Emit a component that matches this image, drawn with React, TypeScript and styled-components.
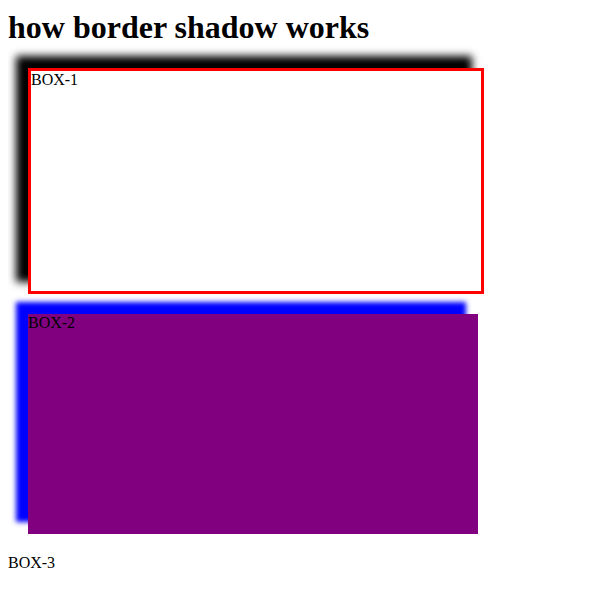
import React from "react";
import styled, { createGlobalStyle } from "styled-components";

const GlobalStyle = createGlobalStyle`
  body {
    margin: 8px;
    background: white;
    color: black;
    font-family: "Liberation Serif", serif;
    font-size: 16px;
    line-height: 18px;
  }
`;

const Title = styled.h1`
  margin: 0 0 22px;
  font-size: 32px;
  line-height: 38px;
  font-weight: bold;
`;

const Box = styled.div<{ $fill: string; $shadow: string; $border?: string }>`
  max-width: 450px;
  height: 220px;
  margin: 20px;
  background: ${({ $fill }) => $fill};
  border: ${({ $border }) => $border ?? "none"};
  box-shadow: ${({ $shadow }) => $shadow};
`;

const Plain = styled.div`
  padding-bottom: 8px;
`;

export default function App() {
  return (
    <>
      <GlobalStyle />
      <main>
        <Title>how border shadow works</Title>
        <Box $fill="white" $border="3px solid red" $shadow="-12px -12px 8px black">
          BOX-1
        </Box>
        <Box $fill="purple" $shadow="-12px -12px 5px blue">
          BOX-2
        </Box>
        <Plain>BOX-3</Plain>
      </main>
    </>
  );
}
